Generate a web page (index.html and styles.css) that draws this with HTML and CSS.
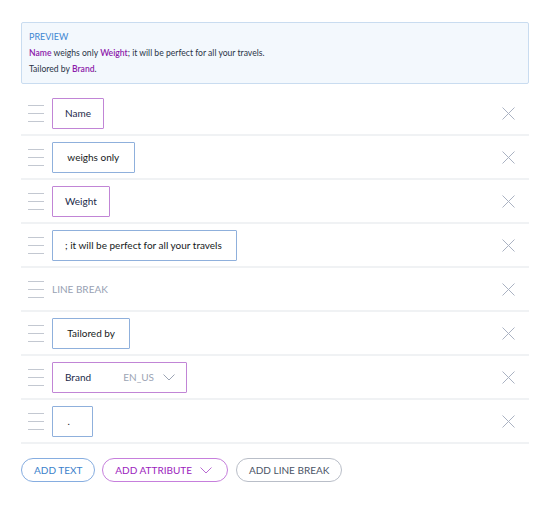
FILE: index.html
```html
<!DOCTYPE html>
<html>
<head>
<meta charset="utf-8">
<link rel="stylesheet" href="styles.css">
</head>
<body>
<div class="page">
  <div class="preview">
    <div class="preview-title">PREVIEW</div>
    <div class="preview-line"><span class="attr">Name</span> weighs only <span class="attr">Weight</span>; it will be perfect for all your travels.</div>
    <div class="preview-line">Tailored by <span class="attr">Brand</span>.</div>
  </div>

  <div class="rows">
    <div class="row">
      <span class="handle"><i></i><i></i><i></i></span>
      <span class="chip chip-attr">Name</span>
      <span class="close"><svg viewBox="0 0 13 13" width="13" height="13"><path d="M0.5 0.5L12.5 12.5M12.5 0.5L0.5 12.5"/></svg></span>
    </div>
    <div class="row">
      <span class="handle"><i></i><i></i><i></i></span>
      <span class="chip chip-text"> weighs only </span>
      <span class="close"><svg viewBox="0 0 13 13" width="13" height="13"><path d="M0.5 0.5L12.5 12.5M12.5 0.5L0.5 12.5"/></svg></span>
    </div>
    <div class="row">
      <span class="handle"><i></i><i></i><i></i></span>
      <span class="chip chip-attr">Weight</span>
      <span class="close"><svg viewBox="0 0 13 13" width="13" height="13"><path d="M0.5 0.5L12.5 12.5M12.5 0.5L0.5 12.5"/></svg></span>
    </div>
    <div class="row">
      <span class="handle"><i></i><i></i><i></i></span>
      <span class="chip chip-text">; it will be perfect for all your travels </span>
      <span class="close"><svg viewBox="0 0 13 13" width="13" height="13"><path d="M0.5 0.5L12.5 12.5M12.5 0.5L0.5 12.5"/></svg></span>
    </div>
    <div class="row">
      <span class="handle"><i></i><i></i><i></i></span>
      <span class="linebreak">LINE BREAK</span>
      <span class="close"><svg viewBox="0 0 13 13" width="13" height="13"><path d="M0.5 0.5L12.5 12.5M12.5 0.5L0.5 12.5"/></svg></span>
    </div>
    <div class="row">
      <span class="handle"><i></i><i></i><i></i></span>
      <span class="chip chip-text"> Tailored by </span>
      <span class="close"><svg viewBox="0 0 13 13" width="13" height="13"><path d="M0.5 0.5L12.5 12.5M12.5 0.5L0.5 12.5"/></svg></span>
    </div>
    <div class="row">
      <span class="handle"><i></i><i></i><i></i></span>
      <span class="chip chip-attr chip-select"><span class="sel-name">Brand</span><span class="sel-locale">EN_US</span><svg class="chev" viewBox="0 0 12 7" width="12" height="7"><path d="M0.5 0.5L6 6L11.5 0.5"/></svg></span>
      <span class="close"><svg viewBox="0 0 13 13" width="13" height="13"><path d="M0.5 0.5L12.5 12.5M12.5 0.5L0.5 12.5"/></svg></span>
    </div>
    <div class="row">
      <span class="handle"><i></i><i></i><i></i></span>
      <span class="chip chip-text chip-dot"> .</span>
      <span class="close"><svg viewBox="0 0 13 13" width="13" height="13"><path d="M0.5 0.5L12.5 12.5M12.5 0.5L0.5 12.5"/></svg></span>
    </div>
  </div>

  <div class="actions">
    <button class="btn btn-blue">ADD TEXT</button>
    <button class="btn btn-purple">ADD ATTRIBUTE <svg class="chev" viewBox="0 0 12 7" width="12" height="7"><path d="M0.5 0.5L6 6L11.5 0.5"/></svg></button>
    <button class="btn btn-grey">ADD LINE BREAK</button>
  </div>
</div>
</body>
</html>
```

FILE: styles.css
```css
* { box-sizing: border-box; }
body {
  margin: 0;
  background: #ffffff;
  font-family: Lato, "Open Sans", sans-serif;
  color: #1c2a45;
}
.page {
  padding: 22px 21px 0 21px;
  width: 550px;
}
.preview {
  border: 1px solid #c9dcf0;
  background: #f3f8fd;
  border-radius: 2px;
  padding: 6px 7px 5px 7px;
  font-size: 8.6px;
  line-height: 16px;
  height: 62px;
}
.preview-title {
  color: #3d87d2;
  font-size: 9px;
}
.preview-line { color: #2a3447; }
.attr { color: #8d1aab; font-weight: 600; }

.rows {
  margin-top: 8px;
}
.row {
  display: flex;
  align-items: center;
  height: 44px;
  border-bottom: 2px solid #f0f2f4;
  padding-left: 7px;
  padding-right: 14px;
}
.handle {
  width: 16px;
  height: 17px;
  display: flex;
  flex-direction: column;
  justify-content: space-between;
  margin-right: 8px;
  flex: none;
}
.handle i {
  display: block;
  height: 1px;
  background: #c3c8d1;
}
.chip {
  height: 31px;
  display: inline-flex;
  align-items: center;
  padding: 0 12px;
  border: 1px solid #8fb0dc;
  border-radius: 1px;
  font-size: 10px;
  white-space: pre;
  color: #161a22;
}
.chip-attr {
  border-color: #c185d6;
  color: #1c2a4a;
}
.chip-dot { min-width: 41px; }
.chip-select { width: 135px; padding-right: 11px; }
.sel-name { flex: 1; }
.sel-locale { color: #9ca4b4; margin-right: 9px; }
.chev { fill: none; stroke: #9ca4b4; stroke-width: 1; }
.linebreak {
  font-size: 10px;
  color: #98a1b3;
}
.close {
  margin-left: auto;
  width: 13px;
  height: 13px;
  display: flex;
}
.close svg { fill: none; stroke: #aab2c2; stroke-width: 1; }

.actions {
  display: flex;
  gap: 7px;
  margin-top: 14px;
}
.btn {
  height: 24px;
  border-radius: 12px;
  background: #fff;
  font-family: Lato, "Open Sans", sans-serif;
  font-size: 10px;
  padding: 0 12px;
  display: inline-flex;
  align-items: center;
  gap: 8px;
  border: 1px solid;
  cursor: pointer;
}
.btn-blue { border-color: #86ade0; color: #3b7fcb; }
.btn-purple { border-color: #c67fdc; color: #9c22bd; padding: 0 15px 0 12px; }
.btn-purple .chev { stroke: #b86ad2; }
.btn-grey { border-color: #b9bec8; color: #4b5466; padding: 0 12px; margin-left: 1px; }
```
